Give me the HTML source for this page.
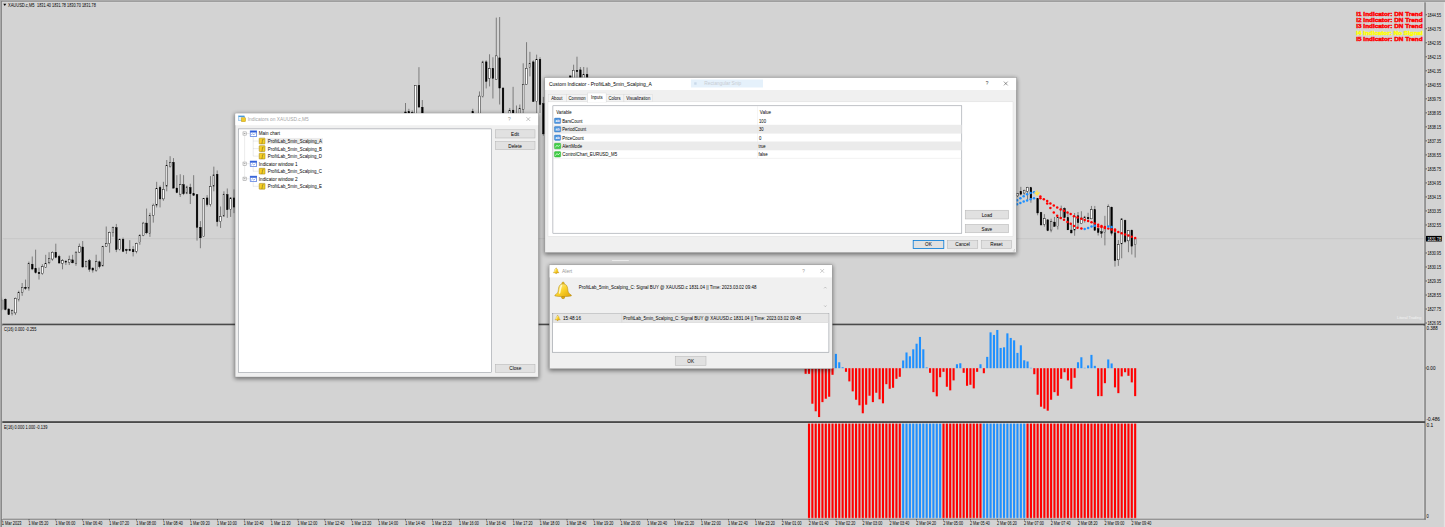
<!DOCTYPE html>
<html><head><meta charset="utf-8"><title>XAUUSD.c,M5</title>
<style>
html,body{margin:0;padding:0;background:#d3d3d3;overflow:hidden}
#root{position:relative;width:1445px;height:527px;overflow:hidden}
svg{display:block;position:absolute;left:0;top:0}
</style>
</head><body>
<div id="root">
<svg width="1445" height="527" viewBox="0 0 1445 527" font-family='"Liberation Sans", sans-serif'>
<defs>
<filter id="sh" x="-5%" y="-10%" width="110%" height="120%"><feGaussianBlur stdDeviation="2.2"/></filter>
<linearGradient id="gold" x1="0" y1="0" x2="1" y2="1"><stop offset="0" stop-color="#fff3a6"/><stop offset="0.5" stop-color="#fad22c"/><stop offset="1" stop-color="#dfa20a"/></linearGradient>
</defs>
<rect x="0" y="0" width="1445" height="527" fill="#d3d3d3"/>
<line x1="2" x2="1425" y1="238.6" y2="238.6" stroke="#c3c3c3" stroke-width="0.7"/>
<g id="candles" stroke="#000" stroke-width="0.42">
<line x1="2.00" x2="2.00" y1="297.52" y2="310.34"/>
<rect x="1.17" y="300.09" width="1.67" height="9.40" fill="#fff"/>
<line x1="5.36" x2="5.36" y1="298.38" y2="310.34"/>
<rect x="4.53" y="299.23" width="1.67" height="10.26" fill="#000"/>
<line x1="8.72" x2="8.72" y1="308.63" y2="314.96"/>
<rect x="7.89" y="308.97" width="1.67" height="5.64" fill="#000"/>
<line x1="12.09" x2="12.09" y1="309.49" y2="315.47"/>
<rect x="11.25" y="310.68" width="1.67" height="3.08" fill="#fff"/>
<line x1="15.45" x2="15.45" y1="297.52" y2="314.96"/>
<rect x="14.61" y="298.38" width="1.67" height="14.53" fill="#fff"/>
<line x1="18.81" x2="18.81" y1="290.68" y2="301.45"/>
<rect x="17.98" y="292.39" width="1.67" height="6.84" fill="#fff"/>
<line x1="22.17" x2="22.17" y1="282.99" y2="295.81"/>
<rect x="21.34" y="287.26" width="1.67" height="5.13" fill="#fff"/>
<line x1="25.54" x2="25.54" y1="279.57" y2="289.83"/>
<rect x="24.70" y="287.26" width="1.67" height="1.20" fill="#000"/>
<line x1="28.90" x2="28.90" y1="261.62" y2="290.68"/>
<rect x="28.06" y="263.33" width="1.67" height="24.79" fill="#fff"/>
<line x1="32.26" x2="32.26" y1="256.50" y2="270.17"/>
<rect x="31.43" y="264.19" width="1.67" height="4.79" fill="#000"/>
<line x1="35.62" x2="35.62" y1="249.66" y2="273.59"/>
<rect x="34.79" y="268.46" width="1.67" height="4.27" fill="#000"/>
<line x1="38.99" x2="38.99" y1="267.61" y2="279.57"/>
<rect x="38.15" y="272.39" width="1.67" height="1.37" fill="#000"/>
<line x1="42.35" x2="42.35" y1="264.19" y2="274.79"/>
<rect x="41.51" y="266.75" width="1.67" height="6.84" fill="#fff"/>
<line x1="45.71" x2="45.71" y1="254.79" y2="267.95"/>
<rect x="44.88" y="263.33" width="1.67" height="3.93" fill="#fff"/>
<line x1="49.07" x2="49.07" y1="252.22" y2="264.19"/>
<rect x="48.24" y="258.21" width="1.67" height="4.62" fill="#fff"/>
<line x1="52.44" x2="52.44" y1="251.37" y2="260.77"/>
<rect x="51.60" y="252.22" width="1.67" height="6.84" fill="#fff"/>
<line x1="55.80" x2="55.80" y1="243.68" y2="258.21"/>
<rect x="54.96" y="252.22" width="1.67" height="5.13" fill="#000"/>
<line x1="59.16" x2="59.16" y1="254.79" y2="263.68"/>
<rect x="58.33" y="256.50" width="1.67" height="6.50" fill="#000"/>
<line x1="62.52" x2="62.52" y1="259.06" y2="269.32"/>
<rect x="61.69" y="260.77" width="1.67" height="2.56" fill="#fff"/>
<line x1="65.89" x2="65.89" y1="259.91" y2="265.04"/>
<rect x="65.05" y="261.28" width="1.67" height="0.85" fill="#000"/>
<line x1="69.25" x2="69.25" y1="255.64" y2="265.04"/>
<rect x="68.42" y="259.40" width="1.67" height="3.08" fill="#fff"/>
<line x1="72.61" x2="72.61" y1="254.79" y2="263.33"/>
<rect x="71.78" y="259.91" width="1.67" height="2.91" fill="#000"/>
<line x1="75.97" x2="75.97" y1="251.28" y2="265.81"/>
<rect x="75.14" y="252.14" width="1.67" height="11.11" fill="#fff"/>
<line x1="79.34" x2="79.34" y1="243.59" y2="252.99"/>
<rect x="78.50" y="246.50" width="1.67" height="5.64" fill="#fff"/>
<line x1="82.70" x2="82.70" y1="241.03" y2="267.52"/>
<rect x="81.86" y="247.01" width="1.67" height="20.00" fill="#000"/>
<line x1="86.06" x2="86.06" y1="260.68" y2="267.52"/>
<rect x="85.23" y="261.20" width="1.67" height="5.47" fill="#fff"/>
<line x1="89.42" x2="89.42" y1="258.97" y2="271.79"/>
<rect x="88.59" y="260.68" width="1.67" height="8.55" fill="#000"/>
<line x1="92.79" x2="92.79" y1="267.52" y2="272.65"/>
<rect x="91.95" y="268.03" width="1.67" height="2.05" fill="#000"/>
<line x1="96.15" x2="96.15" y1="254.70" y2="271.79"/>
<rect x="95.31" y="261.54" width="1.67" height="8.89" fill="#fff"/>
<line x1="99.51" x2="99.51" y1="260.68" y2="268.38"/>
<rect x="98.68" y="261.88" width="1.67" height="4.79" fill="#000"/>
<line x1="102.88" x2="102.88" y1="245.81" y2="266.67"/>
<rect x="102.04" y="246.50" width="1.67" height="19.32" fill="#fff"/>
<line x1="106.24" x2="106.24" y1="226.50" y2="247.01"/>
<rect x="105.40" y="243.59" width="1.67" height="2.91" fill="#fff"/>
<line x1="109.60" x2="109.60" y1="231.62" y2="252.65"/>
<rect x="108.77" y="232.48" width="1.67" height="11.11" fill="#fff"/>
<line x1="112.96" x2="112.96" y1="226.50" y2="236.75"/>
<rect x="112.13" y="227.35" width="1.67" height="5.13" fill="#fff"/>
<line x1="116.32" x2="116.32" y1="223.93" y2="252.14"/>
<rect x="115.49" y="227.69" width="1.67" height="21.88" fill="#000"/>
<line x1="119.69" x2="119.69" y1="238.46" y2="250.43"/>
<rect x="118.85" y="239.66" width="1.67" height="9.91" fill="#fff"/>
<line x1="123.05" x2="123.05" y1="237.61" y2="252.14"/>
<rect x="122.22" y="239.32" width="1.67" height="11.97" fill="#000"/>
<line x1="126.41" x2="126.41" y1="248.72" y2="253.85"/>
<rect x="125.58" y="249.57" width="1.67" height="1.03" fill="#000"/>
<line x1="129.77" x2="129.77" y1="240.17" y2="251.28"/>
<rect x="128.94" y="249.57" width="1.67" height="1.03" fill="#000"/>
<line x1="133.14" x2="133.14" y1="246.15" y2="256.41"/>
<rect x="132.30" y="249.57" width="1.67" height="2.22" fill="#000"/>
<line x1="136.50" x2="136.50" y1="242.74" y2="253.33"/>
<rect x="135.66" y="243.59" width="1.67" height="7.69" fill="#fff"/>
<line x1="139.86" x2="139.86" y1="234.19" y2="244.79"/>
<rect x="139.03" y="235.38" width="1.67" height="7.35" fill="#fff"/>
<line x1="143.22" x2="143.22" y1="221.88" y2="236.24"/>
<rect x="142.39" y="223.08" width="1.67" height="12.31" fill="#fff"/>
<line x1="146.59" x2="146.59" y1="208.55" y2="234.19"/>
<rect x="145.75" y="223.08" width="1.67" height="9.74" fill="#000"/>
<line x1="149.95" x2="149.95" y1="212.75" y2="236.85"/>
<rect x="149.11" y="215.41" width="1.67" height="17.84" fill="#fff"/>
<line x1="153.31" x2="153.31" y1="203.64" y2="222.62"/>
<rect x="152.48" y="205.16" width="1.67" height="10.25" fill="#fff"/>
<line x1="156.67" x2="156.67" y1="181.82" y2="207.44"/>
<rect x="155.84" y="188.46" width="1.67" height="16.70" fill="#fff"/>
<line x1="160.04" x2="160.04" y1="185.62" y2="207.44"/>
<rect x="159.20" y="187.51" width="1.67" height="11.39" fill="#000"/>
<line x1="163.40" x2="163.40" y1="181.82" y2="200.80"/>
<rect x="162.56" y="189.41" width="1.67" height="9.49" fill="#fff"/>
<line x1="166.76" x2="166.76" y1="160.00" y2="191.31"/>
<rect x="165.93" y="165.69" width="1.67" height="20.49" fill="#fff"/>
<line x1="170.12" x2="170.12" y1="156.20" y2="167.59"/>
<rect x="169.29" y="162.28" width="1.67" height="4.36" fill="#fff"/>
<line x1="173.49" x2="173.49" y1="158.10" y2="188.46"/>
<rect x="172.65" y="162.28" width="1.67" height="25.81" fill="#000"/>
<line x1="176.85" x2="176.85" y1="175.18" y2="193.21"/>
<rect x="176.01" y="188.08" width="1.67" height="4.55" fill="#000"/>
<line x1="180.21" x2="180.21" y1="174.23" y2="197.00"/>
<rect x="179.38" y="184.67" width="1.67" height="9.49" fill="#fff"/>
<line x1="183.57" x2="183.57" y1="175.18" y2="195.10"/>
<rect x="182.74" y="184.67" width="1.67" height="9.11" fill="#000"/>
<line x1="186.94" x2="186.94" y1="185.62" y2="194.16"/>
<rect x="186.10" y="186.94" width="1.67" height="6.26" fill="#fff"/>
<line x1="190.30" x2="190.30" y1="183.72" y2="204.02"/>
<rect x="189.46" y="187.51" width="1.67" height="6.26" fill="#000"/>
<line x1="193.66" x2="193.66" y1="175.18" y2="196.05"/>
<rect x="192.83" y="193.78" width="1.67" height="1.52" fill="#000"/>
<line x1="197.02" x2="197.02" y1="194.16" y2="240.65"/>
<rect x="196.19" y="194.72" width="1.67" height="32.64" fill="#000"/>
<line x1="200.39" x2="200.39" y1="221.10" y2="248.24"/>
<rect x="199.55" y="227.36" width="1.67" height="10.44" fill="#000"/>
<line x1="203.75" x2="203.75" y1="197.95" y2="236.85"/>
<rect x="202.91" y="198.52" width="1.67" height="37.95" fill="#fff"/>
<line x1="207.11" x2="207.11" y1="195.10" y2="206.49"/>
<rect x="206.28" y="197.95" width="1.67" height="6.64" fill="#000"/>
<line x1="210.47" x2="210.47" y1="176.13" y2="206.49"/>
<rect x="209.64" y="186.57" width="1.67" height="18.03" fill="#fff"/>
<line x1="213.84" x2="213.84" y1="166.64" y2="191.31"/>
<rect x="213.00" y="174.80" width="1.67" height="11.39" fill="#fff"/>
<line x1="217.20" x2="217.20" y1="170.44" y2="226.41"/>
<rect x="216.36" y="174.23" width="1.67" height="47.44" fill="#000"/>
<line x1="220.56" x2="220.56" y1="206.49" y2="227.93"/>
<rect x="219.73" y="216.55" width="1.67" height="5.12" fill="#fff"/>
<line x1="223.92" x2="223.92" y1="191.31" y2="216.93"/>
<rect x="223.09" y="194.16" width="1.67" height="21.82" fill="#fff"/>
<line x1="227.29" x2="227.29" y1="188.46" y2="217.87"/>
<rect x="226.45" y="194.54" width="1.67" height="15.18" fill="#000"/>
<line x1="230.65" x2="230.65" y1="197.00" y2="216.93"/>
<rect x="229.81" y="197.95" width="1.67" height="11.39" fill="#fff"/>
<line x1="234.01" x2="234.01" y1="189.41" y2="213.13"/>
<rect x="233.18" y="197.95" width="1.67" height="9.11" fill="#000"/>
<line x1="405.50" x2="405.50" y1="103.00" y2="120.00"/>
<rect x="404.67" y="112.00" width="1.67" height="6.00" fill="#000"/>
<line x1="408.86" x2="408.86" y1="108.80" y2="120.00"/>
<rect x="408.03" y="111.60" width="1.67" height="6.40" fill="#000"/>
<line x1="412.22" x2="412.22" y1="110.50" y2="120.00"/>
<rect x="411.39" y="112.60" width="1.67" height="5.40" fill="#000"/>
<line x1="415.59" x2="415.59" y1="85.00" y2="122.00"/>
<rect x="414.75" y="85.40" width="1.67" height="34.60" fill="#fff"/>
<line x1="418.95" x2="418.95" y1="67.20" y2="108.00"/>
<rect x="418.12" y="85.40" width="1.67" height="21.60" fill="#000"/>
<line x1="422.31" x2="422.31" y1="100.00" y2="122.00"/>
<rect x="421.48" y="107.20" width="1.67" height="12.80" fill="#000"/>
<line x1="472.75" x2="472.75" y1="108.75" y2="119.61"/>
<rect x="471.92" y="111.57" width="1.67" height="7.04" fill="#000"/>
<line x1="479.47" x2="479.47" y1="91.46" y2="123.64"/>
<rect x="478.64" y="96.08" width="1.67" height="26.55" fill="#fff"/>
<line x1="482.84" x2="482.84" y1="60.68" y2="97.49"/>
<rect x="482.00" y="61.89" width="1.67" height="34.59" fill="#fff"/>
<line x1="486.20" x2="486.20" y1="60.28" y2="88.44"/>
<rect x="485.37" y="61.89" width="1.67" height="19.51" fill="#000"/>
<line x1="489.56" x2="489.56" y1="54.25" y2="86.43"/>
<rect x="488.73" y="68.73" width="1.67" height="9.65" fill="#fff"/>
<line x1="492.92" x2="492.92" y1="57.26" y2="98.50"/>
<rect x="492.09" y="68.33" width="1.67" height="10.06" fill="#000"/>
<line x1="496.29" x2="496.29" y1="17.64" y2="79.79"/>
<rect x="495.45" y="55.86" width="1.67" height="23.53" fill="#fff"/>
<line x1="499.65" x2="499.65" y1="17.04" y2="104.53"/>
<rect x="498.81" y="57.87" width="1.67" height="30.17" fill="#000"/>
<line x1="503.01" x2="503.01" y1="87.43" y2="123.64"/>
<rect x="502.18" y="88.04" width="1.67" height="34.59" fill="#000"/>
<line x1="509.74" x2="509.74" y1="107.95" y2="119.61"/>
<rect x="508.90" y="110.56" width="1.67" height="8.05" fill="#fff"/>
<line x1="513.10" x2="513.10" y1="86.83" y2="119.61"/>
<rect x="512.26" y="110.16" width="1.67" height="8.45" fill="#000"/>
<line x1="516.46" x2="516.46" y1="105.53" y2="119.61"/>
<rect x="515.63" y="116.60" width="1.67" height="2.01" fill="#000"/>
<line x1="519.82" x2="519.82" y1="104.53" y2="119.61"/>
<rect x="518.99" y="108.55" width="1.67" height="10.06" fill="#fff"/>
<line x1="523.19" x2="523.19" y1="63.30" y2="119.61"/>
<rect x="522.35" y="84.42" width="1.67" height="24.94" fill="#fff"/>
<line x1="526.55" x2="526.55" y1="42.18" y2="84.82"/>
<rect x="525.71" y="68.33" width="1.67" height="16.09" fill="#fff"/>
<line x1="529.91" x2="529.91" y1="51.83" y2="76.37"/>
<rect x="529.08" y="63.30" width="1.67" height="4.02" fill="#fff"/>
<line x1="533.27" x2="533.27" y1="60.28" y2="101.91"/>
<rect x="532.44" y="61.89" width="1.67" height="39.62" fill="#000"/>
<line x1="536.64" x2="536.64" y1="54.65" y2="112.98"/>
<rect x="535.80" y="59.28" width="1.67" height="42.24" fill="#fff"/>
<line x1="540.00" x2="540.00" y1="57.26" y2="112.98"/>
<rect x="539.16" y="59.28" width="1.67" height="45.25" fill="#000"/>
<line x1="543.36" x2="543.36" y1="96.89" y2="135.70"/>
<rect x="542.53" y="103.52" width="1.67" height="30.37" fill="#000"/>
<line x1="570.26" x2="570.26" y1="75.50" y2="80.00"/>
<rect x="569.43" y="75.90" width="1.67" height="4.10" fill="#000"/>
<line x1="573.62" x2="573.62" y1="64.70" y2="80.00"/>
<rect x="572.79" y="70.30" width="1.67" height="9.70" fill="#fff"/>
<line x1="576.99" x2="576.99" y1="56.70" y2="80.00"/>
<rect x="576.15" y="70.30" width="1.67" height="1.30" fill="#000"/>
<line x1="580.35" x2="580.35" y1="67.00" y2="80.00"/>
<rect x="579.51" y="69.90" width="1.67" height="10.10" fill="#000"/>
<line x1="583.71" x2="583.71" y1="67.00" y2="80.00"/>
<rect x="582.88" y="74.30" width="1.67" height="5.70" fill="#fff"/>
<line x1="587.07" x2="587.07" y1="67.50" y2="80.00"/>
<rect x="586.24" y="74.30" width="1.67" height="5.70" fill="#000"/>
<line x1="1017.47" x2="1017.47" y1="193.08" y2="197.06"/>
<rect x="1016.64" y="193.65" width="1.67" height="2.28" fill="#fff"/>
<line x1="1020.84" x2="1020.84" y1="186.83" y2="195.36"/>
<rect x="1020.00" y="191.38" width="1.67" height="2.84" fill="#000"/>
<line x1="1024.20" x2="1024.20" y1="189.67" y2="194.79"/>
<rect x="1023.36" y="190.24" width="1.67" height="2.84" fill="#fff"/>
<line x1="1027.56" x2="1027.56" y1="186.83" y2="199.91"/>
<rect x="1026.73" y="187.39" width="1.67" height="3.98" fill="#fff"/>
<line x1="1030.92" x2="1030.92" y1="186.83" y2="202.75"/>
<rect x="1030.09" y="187.74" width="1.67" height="10.47" fill="#000"/>
<line x1="1037.65" x2="1037.65" y1="198.20" y2="215.27"/>
<rect x="1036.81" y="198.77" width="1.67" height="14.22" fill="#000"/>
<line x1="1041.01" x2="1041.01" y1="211.85" y2="225.51"/>
<rect x="1040.18" y="212.42" width="1.67" height="12.51" fill="#000"/>
<line x1="1044.38" x2="1044.38" y1="214.13" y2="226.64"/>
<rect x="1043.54" y="218.68" width="1.67" height="5.69" fill="#fff"/>
<line x1="1047.74" x2="1047.74" y1="219.25" y2="231.19"/>
<rect x="1046.90" y="219.82" width="1.67" height="10.81" fill="#000"/>
<line x1="1051.10" x2="1051.10" y1="218.68" y2="232.33"/>
<rect x="1050.26" y="221.52" width="1.67" height="8.53" fill="#fff"/>
<line x1="1054.46" x2="1054.46" y1="216.97" y2="226.64"/>
<rect x="1053.63" y="222.09" width="1.67" height="4.32" fill="#000"/>
<line x1="1057.83" x2="1057.83" y1="216.41" y2="229.49"/>
<rect x="1056.99" y="217.54" width="1.67" height="9.10" fill="#fff"/>
<line x1="1061.19" x2="1061.19" y1="205.60" y2="219.25"/>
<rect x="1060.35" y="209.01" width="1.67" height="8.53" fill="#fff"/>
<line x1="1064.55" x2="1064.55" y1="207.30" y2="218.11"/>
<rect x="1063.71" y="208.44" width="1.67" height="9.10" fill="#000"/>
<line x1="1067.91" x2="1067.91" y1="212.99" y2="230.06"/>
<rect x="1067.08" y="217.54" width="1.67" height="12.29" fill="#000"/>
<line x1="1071.27" x2="1071.27" y1="223.23" y2="233.47"/>
<rect x="1070.44" y="230.06" width="1.67" height="2.84" fill="#000"/>
<line x1="1074.64" x2="1074.64" y1="212.99" y2="235.75"/>
<rect x="1073.80" y="216.41" width="1.67" height="13.65" fill="#fff"/>
<line x1="1078.00" x2="1078.00" y1="212.00" y2="227.94"/>
<rect x="1077.16" y="215.80" width="1.67" height="6.83" fill="#000"/>
<line x1="1081.36" x2="1081.36" y1="211.24" y2="224.14"/>
<rect x="1080.53" y="218.07" width="1.67" height="5.61" fill="#fff"/>
<line x1="1084.72" x2="1084.72" y1="215.80" y2="222.63"/>
<rect x="1083.89" y="217.01" width="1.67" height="2.58" fill="#fff"/>
<line x1="1088.09" x2="1088.09" y1="212.76" y2="219.59"/>
<rect x="1087.25" y="217.31" width="1.67" height="1.52" fill="#000"/>
<line x1="1091.45" x2="1091.45" y1="205.93" y2="219.14"/>
<rect x="1090.62" y="209.73" width="1.67" height="9.10" fill="#fff"/>
<line x1="1094.81" x2="1094.81" y1="205.93" y2="230.97"/>
<rect x="1093.98" y="209.73" width="1.67" height="20.49" fill="#000"/>
<line x1="1098.17" x2="1098.17" y1="227.94" y2="235.52"/>
<rect x="1097.34" y="228.69" width="1.67" height="3.79" fill="#000"/>
<line x1="1101.54" x2="1101.54" y1="227.94" y2="237.80"/>
<rect x="1100.70" y="231.73" width="1.67" height="1.52" fill="#000"/>
<line x1="1104.90" x2="1104.90" y1="215.80" y2="245.39"/>
<rect x="1104.06" y="227.18" width="1.67" height="5.31" fill="#fff"/>
<line x1="1108.26" x2="1108.26" y1="204.42" y2="226.72"/>
<rect x="1107.43" y="206.69" width="1.67" height="19.73" fill="#fff"/>
<line x1="1111.62" x2="1111.62" y1="206.69" y2="235.52"/>
<rect x="1110.79" y="207.15" width="1.67" height="26.10" fill="#000"/>
<line x1="1114.99" x2="1114.99" y1="232.49" y2="266.63"/>
<rect x="1114.15" y="232.79" width="1.67" height="27.77" fill="#000"/>
<line x1="1118.35" x2="1118.35" y1="240.08" y2="265.87"/>
<rect x="1117.51" y="244.63" width="1.67" height="15.17" fill="#fff"/>
<line x1="1121.71" x2="1121.71" y1="218.07" y2="258.29"/>
<rect x="1120.88" y="218.83" width="1.67" height="25.04" fill="#fff"/>
<line x1="1125.08" x2="1125.08" y1="219.59" y2="243.11"/>
<rect x="1124.24" y="220.35" width="1.67" height="21.24" fill="#000"/>
<line x1="1128.44" x2="1128.44" y1="230.21" y2="252.22"/>
<rect x="1127.60" y="230.52" width="1.67" height="10.32" fill="#fff"/>
<line x1="1131.80" x2="1131.80" y1="229.45" y2="254.49"/>
<rect x="1130.96" y="230.21" width="1.67" height="15.93" fill="#000"/>
<line x1="1135.16" x2="1135.16" y1="238.56" y2="257.53"/>
<rect x="1134.33" y="238.86" width="1.67" height="5.77" fill="#fff"/>
</g>
<circle cx="1017.1" cy="200.2" r="1.25" fill="#1e90ff"/>
<circle cx="1020.4" cy="198.2" r="1.25" fill="#1e90ff"/>
<circle cx="1023.7" cy="196.3" r="1.25" fill="#1e90ff"/>
<circle cx="1027.1" cy="194.2" r="1.25" fill="#1e90ff"/>
<circle cx="1030.6" cy="192.9" r="1.25" fill="#1e90ff"/>
<circle cx="1034.0" cy="192.3" r="1.25" fill="#1e90ff"/>
<circle cx="1017.1" cy="204.2" r="1.25" fill="#1e90ff"/>
<circle cx="1020.4" cy="203.1" r="1.25" fill="#1e90ff"/>
<circle cx="1023.7" cy="201.6" r="1.25" fill="#1e90ff"/>
<circle cx="1027.1" cy="200.6" r="1.25" fill="#1e90ff"/>
<circle cx="1030.6" cy="199.3" r="1.25" fill="#1e90ff"/>
<circle cx="1034.0" cy="198.2" r="1.25" fill="#1e90ff"/>
<circle cx="1040.4" cy="196.5" r="1.25" fill="#ff0000"/>
<circle cx="1040.4" cy="198.3" r="1.25" fill="#ff0000"/>
<circle cx="1043.8" cy="199.3" r="1.25" fill="#ff0000"/>
<circle cx="1047.2" cy="201.0" r="1.25" fill="#ff0000"/>
<circle cx="1050.4" cy="203.5" r="1.25" fill="#ff0000"/>
<circle cx="1053.8" cy="205.6" r="1.25" fill="#ff0000"/>
<circle cx="1057.2" cy="207.6" r="1.25" fill="#ff0000"/>
<circle cx="1060.6" cy="209.4" r="1.25" fill="#ff0000"/>
<circle cx="1064.0" cy="210.7" r="1.25" fill="#ff0000"/>
<circle cx="1067.5" cy="212.4" r="1.25" fill="#ff0000"/>
<circle cx="1070.7" cy="214.1" r="1.25" fill="#ff0000"/>
<circle cx="1074.0" cy="216.2" r="1.25" fill="#ff0000"/>
<circle cx="1077.5" cy="217.5" r="1.25" fill="#ff0000"/>
<circle cx="1047.2" cy="203.5" r="1.25" fill="#ff0000"/>
<circle cx="1050.4" cy="207.9" r="1.25" fill="#ff0000"/>
<circle cx="1053.8" cy="212.4" r="1.25" fill="#ff0000"/>
<circle cx="1057.2" cy="215.8" r="1.25" fill="#ff0000"/>
<circle cx="1060.6" cy="218.1" r="1.25" fill="#ff0000"/>
<circle cx="1064.0" cy="219.8" r="1.25" fill="#ff0000"/>
<circle cx="1067.5" cy="222.1" r="1.25" fill="#ff0000"/>
<circle cx="1070.7" cy="223.8" r="1.25" fill="#ff0000"/>
<circle cx="1074.0" cy="226.1" r="1.25" fill="#ff0000"/>
<circle cx="1077.5" cy="227.8" r="1.25" fill="#ff0000"/>
<circle cx="1081.4" cy="218.7" r="1.25" fill="#ff0000"/>
<circle cx="1084.7" cy="219.9" r="1.25" fill="#ff0000"/>
<circle cx="1088.1" cy="221.1" r="1.25" fill="#ff0000"/>
<circle cx="1091.5" cy="222.3" r="1.25" fill="#ff0000"/>
<circle cx="1094.8" cy="223.5" r="1.25" fill="#ff0000"/>
<circle cx="1098.2" cy="224.7" r="1.25" fill="#ff0000"/>
<circle cx="1101.5" cy="225.9" r="1.25" fill="#ff0000"/>
<circle cx="1104.9" cy="227.1" r="1.25" fill="#ff0000"/>
<circle cx="1108.3" cy="228.4" r="1.25" fill="#ff0000"/>
<circle cx="1111.6" cy="229.6" r="1.25" fill="#ff0000"/>
<circle cx="1115.0" cy="230.8" r="1.25" fill="#ff0000"/>
<circle cx="1118.3" cy="232.0" r="1.25" fill="#ff0000"/>
<circle cx="1121.7" cy="233.2" r="1.25" fill="#ff0000"/>
<circle cx="1125.1" cy="234.4" r="1.25" fill="#ff0000"/>
<circle cx="1128.4" cy="235.6" r="1.25" fill="#ff0000"/>
<circle cx="1131.8" cy="236.8" r="1.25" fill="#ff0000"/>
<circle cx="1135.2" cy="238.0" r="1.25" fill="#ff0000"/>
<circle cx="1081.4" cy="228.6" r="1.25" fill="#ff0000"/>
<circle cx="1084.7" cy="228.9" r="1.25" fill="#1e90ff"/>
<circle cx="1088.1" cy="228.0" r="1.25" fill="#1e90ff"/>
<circle cx="1091.5" cy="226.6" r="1.25" fill="#1e90ff"/>
<circle cx="1094.8" cy="225.8" r="1.25" fill="#1e90ff"/>
<circle cx="1098.2" cy="226.6" r="1.25" fill="#ff0000"/>
<circle cx="1101.5" cy="227.0" r="1.25" fill="#ff0000"/>
<circle cx="1104.9" cy="228.0" r="1.25" fill="#ff0000"/>
<circle cx="1108.3" cy="226.6" r="1.25" fill="#1e90ff"/>
<circle cx="1111.6" cy="226.9" r="1.25" fill="#1e90ff"/>
<circle cx="1115.0" cy="229.5" r="1.25" fill="#ff0000"/>
<path d="M1034.6 192.2 L1037 195.2 L1039.4 192.2 M1037 190.5 L1037 195" stroke="#ffe34d" stroke-width="1.3" fill="none"/>
<g id="h1">
<rect x="804.59" y="368.20" width="2.1" height="5.62" fill="#ff0000"/>
<rect x="807.95" y="368.20" width="2.1" height="5.62" fill="#ff0000"/>
<rect x="811.31" y="368.20" width="2.1" height="35.52" fill="#ff0000"/>
<rect x="814.67" y="368.20" width="2.1" height="43.09" fill="#ff0000"/>
<rect x="818.04" y="368.20" width="2.1" height="48.87" fill="#ff0000"/>
<rect x="821.40" y="368.20" width="2.1" height="33.92" fill="#ff0000"/>
<rect x="824.76" y="368.20" width="2.1" height="30.53" fill="#ff0000"/>
<rect x="828.12" y="368.20" width="2.1" height="28.54" fill="#ff0000"/>
<rect x="831.49" y="368.20" width="2.1" height="6.61" fill="#ff0000"/>
<rect x="834.85" y="353.88" width="2.1" height="14.32" fill="#1e90ff"/>
<rect x="838.21" y="362.26" width="2.1" height="5.94" fill="#1e90ff"/>
<rect x="841.58" y="367.24" width="2.1" height="0.96" fill="#1e90ff"/>
<rect x="844.94" y="368.20" width="2.1" height="3.62" fill="#ff0000"/>
<rect x="848.30" y="368.20" width="2.1" height="13.19" fill="#ff0000"/>
<rect x="851.66" y="368.20" width="2.1" height="23.16" fill="#ff0000"/>
<rect x="855.02" y="368.20" width="2.1" height="31.53" fill="#ff0000"/>
<rect x="858.39" y="368.20" width="2.1" height="37.11" fill="#ff0000"/>
<rect x="861.75" y="368.20" width="2.1" height="45.08" fill="#ff0000"/>
<rect x="865.11" y="368.20" width="2.1" height="36.51" fill="#ff0000"/>
<rect x="868.48" y="368.20" width="2.1" height="27.54" fill="#ff0000"/>
<rect x="871.84" y="368.20" width="2.1" height="33.92" fill="#ff0000"/>
<rect x="875.20" y="368.20" width="2.1" height="24.55" fill="#ff0000"/>
<rect x="878.56" y="368.20" width="2.1" height="31.13" fill="#ff0000"/>
<rect x="881.92" y="368.20" width="2.1" height="35.12" fill="#ff0000"/>
<rect x="885.29" y="368.20" width="2.1" height="15.98" fill="#ff0000"/>
<rect x="888.65" y="368.20" width="2.1" height="20.57" fill="#ff0000"/>
<rect x="892.01" y="368.20" width="2.1" height="19.57" fill="#ff0000"/>
<rect x="895.38" y="368.20" width="2.1" height="10.60" fill="#ff0000"/>
<rect x="898.74" y="368.20" width="2.1" height="8.61" fill="#ff0000"/>
<rect x="902.10" y="360.46" width="2.1" height="7.74" fill="#1e90ff"/>
<rect x="905.46" y="352.49" width="2.1" height="15.71" fill="#1e90ff"/>
<rect x="908.83" y="356.28" width="2.1" height="11.92" fill="#1e90ff"/>
<rect x="912.19" y="349.30" width="2.1" height="18.90" fill="#1e90ff"/>
<rect x="915.55" y="343.72" width="2.1" height="24.48" fill="#1e90ff"/>
<rect x="918.91" y="336.94" width="2.1" height="31.26" fill="#1e90ff"/>
<rect x="922.27" y="349.30" width="2.1" height="18.90" fill="#1e90ff"/>
<rect x="925.64" y="367.44" width="2.1" height="0.76" fill="#1e90ff"/>
<rect x="929.00" y="368.20" width="2.1" height="4.62" fill="#ff0000"/>
<rect x="932.36" y="368.20" width="2.1" height="23.95" fill="#ff0000"/>
<rect x="935.73" y="368.20" width="2.1" height="28.14" fill="#ff0000"/>
<rect x="939.09" y="368.20" width="2.1" height="9.01" fill="#ff0000"/>
<rect x="942.45" y="368.20" width="2.1" height="3.62" fill="#ff0000"/>
<rect x="945.81" y="368.20" width="2.1" height="18.57" fill="#ff0000"/>
<rect x="949.17" y="368.20" width="2.1" height="22.16" fill="#ff0000"/>
<rect x="952.54" y="368.20" width="2.1" height="12.19" fill="#ff0000"/>
<rect x="955.90" y="364.25" width="2.1" height="3.95" fill="#1e90ff"/>
<rect x="959.26" y="363.25" width="2.1" height="4.95" fill="#1e90ff"/>
<rect x="962.62" y="368.20" width="2.1" height="4.62" fill="#ff0000"/>
<rect x="965.99" y="368.20" width="2.1" height="17.58" fill="#ff0000"/>
<rect x="969.35" y="368.20" width="2.1" height="16.58" fill="#ff0000"/>
<rect x="972.71" y="368.20" width="2.1" height="20.17" fill="#ff0000"/>
<rect x="976.08" y="368.20" width="2.1" height="3.62" fill="#ff0000"/>
<rect x="979.44" y="364.25" width="2.1" height="3.95" fill="#1e90ff"/>
<rect x="982.80" y="368.20" width="2.1" height="5.02" fill="#ff0000"/>
<rect x="986.16" y="356.87" width="2.1" height="11.33" fill="#1e90ff"/>
<rect x="989.52" y="332.36" width="2.1" height="35.84" fill="#1e90ff"/>
<rect x="992.89" y="334.95" width="2.1" height="33.25" fill="#1e90ff"/>
<rect x="996.25" y="329.97" width="2.1" height="38.23" fill="#1e90ff"/>
<rect x="999.61" y="347.91" width="2.1" height="20.29" fill="#1e90ff"/>
<rect x="1002.98" y="347.31" width="2.1" height="20.89" fill="#1e90ff"/>
<rect x="1006.34" y="333.35" width="2.1" height="34.85" fill="#1e90ff"/>
<rect x="1009.70" y="337.94" width="2.1" height="30.26" fill="#1e90ff"/>
<rect x="1013.06" y="340.33" width="2.1" height="27.87" fill="#1e90ff"/>
<rect x="1016.42" y="352.89" width="2.1" height="15.31" fill="#1e90ff"/>
<rect x="1019.79" y="345.31" width="2.1" height="22.89" fill="#1e90ff"/>
<rect x="1023.15" y="360.26" width="2.1" height="7.94" fill="#1e90ff"/>
<rect x="1026.51" y="361.46" width="2.1" height="6.74" fill="#1e90ff"/>
<rect x="1029.88" y="367.84" width="2.1" height="0.40" fill="#1e90ff"/>
<rect x="1033.24" y="368.20" width="2.1" height="6.02" fill="#ff0000"/>
<rect x="1036.60" y="368.20" width="2.1" height="26.55" fill="#ff0000"/>
<rect x="1039.96" y="368.20" width="2.1" height="38.51" fill="#ff0000"/>
<rect x="1043.33" y="368.20" width="2.1" height="40.50" fill="#ff0000"/>
<rect x="1046.69" y="368.20" width="2.1" height="42.49" fill="#ff0000"/>
<rect x="1050.05" y="368.20" width="2.1" height="31.53" fill="#ff0000"/>
<rect x="1053.41" y="368.20" width="2.1" height="23.95" fill="#ff0000"/>
<rect x="1056.78" y="368.20" width="2.1" height="27.54" fill="#ff0000"/>
<rect x="1060.14" y="368.20" width="2.1" height="10.60" fill="#ff0000"/>
<rect x="1063.50" y="368.20" width="2.1" height="4.02" fill="#ff0000"/>
<rect x="1066.86" y="368.20" width="2.1" height="12.19" fill="#ff0000"/>
<rect x="1070.22" y="368.20" width="2.1" height="20.57" fill="#ff0000"/>
<rect x="1073.59" y="368.20" width="2.1" height="9.60" fill="#ff0000"/>
<rect x="1076.95" y="362.26" width="2.1" height="5.94" fill="#1e90ff"/>
<rect x="1080.31" y="357.27" width="2.1" height="10.93" fill="#1e90ff"/>
<rect x="1083.67" y="367.84" width="2.1" height="0.40" fill="#1e90ff"/>
<rect x="1087.04" y="365.45" width="2.1" height="2.75" fill="#1e90ff"/>
<rect x="1090.40" y="354.88" width="2.1" height="13.32" fill="#1e90ff"/>
<rect x="1093.76" y="365.84" width="2.1" height="2.36" fill="#1e90ff"/>
<rect x="1097.12" y="368.20" width="2.1" height="27.94" fill="#ff0000"/>
<rect x="1100.49" y="368.20" width="2.1" height="27.94" fill="#ff0000"/>
<rect x="1103.85" y="368.20" width="2.1" height="14.99" fill="#ff0000"/>
<rect x="1107.21" y="359.47" width="2.1" height="8.73" fill="#1e90ff"/>
<rect x="1110.58" y="363.45" width="2.1" height="4.75" fill="#1e90ff"/>
<rect x="1113.94" y="368.20" width="2.1" height="19.17" fill="#ff0000"/>
<rect x="1117.30" y="368.20" width="2.1" height="24.95" fill="#ff0000"/>
<rect x="1120.66" y="368.20" width="2.1" height="8.21" fill="#ff0000"/>
<rect x="1124.03" y="368.20" width="2.1" height="4.02" fill="#ff0000"/>
<rect x="1127.39" y="368.20" width="2.1" height="7.61" fill="#ff0000"/>
<rect x="1130.75" y="368.20" width="2.1" height="14.19" fill="#ff0000"/>
<rect x="1134.11" y="368.20" width="2.1" height="27.94" fill="#ff0000"/>
</g>
<g id="h2">
<rect x="807.95" y="423.1" width="2.1" height="95.6" fill="#ff0000"/>
<rect x="811.31" y="423.1" width="2.1" height="95.6" fill="#ff0000"/>
<rect x="814.67" y="423.1" width="2.1" height="95.6" fill="#ff0000"/>
<rect x="818.04" y="423.1" width="2.1" height="95.6" fill="#ff0000"/>
<rect x="821.40" y="423.1" width="2.1" height="95.6" fill="#ff0000"/>
<rect x="824.76" y="423.1" width="2.1" height="95.6" fill="#ff0000"/>
<rect x="828.12" y="423.1" width="2.1" height="95.6" fill="#ff0000"/>
<rect x="831.49" y="423.1" width="2.1" height="95.6" fill="#ff0000"/>
<rect x="834.85" y="423.1" width="2.1" height="95.6" fill="#ff0000"/>
<rect x="838.21" y="423.1" width="2.1" height="95.6" fill="#ff0000"/>
<rect x="841.58" y="423.1" width="2.1" height="95.6" fill="#ff0000"/>
<rect x="844.94" y="423.1" width="2.1" height="95.6" fill="#ff0000"/>
<rect x="848.30" y="423.1" width="2.1" height="95.6" fill="#ff0000"/>
<rect x="851.66" y="423.1" width="2.1" height="95.6" fill="#ff0000"/>
<rect x="855.02" y="423.1" width="2.1" height="95.6" fill="#ff0000"/>
<rect x="858.39" y="423.1" width="2.1" height="95.6" fill="#ff0000"/>
<rect x="861.75" y="423.1" width="2.1" height="95.6" fill="#ff0000"/>
<rect x="865.11" y="423.1" width="2.1" height="95.6" fill="#ff0000"/>
<rect x="868.48" y="423.1" width="2.1" height="95.6" fill="#ff0000"/>
<rect x="871.84" y="423.1" width="2.1" height="95.6" fill="#ff0000"/>
<rect x="875.20" y="423.1" width="2.1" height="95.6" fill="#ff0000"/>
<rect x="878.56" y="423.1" width="2.1" height="95.6" fill="#ff0000"/>
<rect x="881.92" y="423.1" width="2.1" height="95.6" fill="#ff0000"/>
<rect x="885.29" y="423.1" width="2.1" height="95.6" fill="#ff0000"/>
<rect x="888.65" y="423.1" width="2.1" height="95.6" fill="#ff0000"/>
<rect x="892.01" y="423.1" width="2.1" height="95.6" fill="#ff0000"/>
<rect x="895.38" y="423.1" width="2.1" height="95.6" fill="#ff0000"/>
<rect x="898.74" y="423.1" width="2.1" height="95.6" fill="#ff0000"/>
<rect x="902.10" y="423.1" width="2.1" height="95.6" fill="#1e90ff"/>
<rect x="905.46" y="423.1" width="2.1" height="95.6" fill="#1e90ff"/>
<rect x="908.83" y="423.1" width="2.1" height="95.6" fill="#1e90ff"/>
<rect x="912.19" y="423.1" width="2.1" height="95.6" fill="#1e90ff"/>
<rect x="915.55" y="423.1" width="2.1" height="95.6" fill="#1e90ff"/>
<rect x="918.91" y="423.1" width="2.1" height="95.6" fill="#1e90ff"/>
<rect x="922.27" y="423.1" width="2.1" height="95.6" fill="#1e90ff"/>
<rect x="925.64" y="423.1" width="2.1" height="95.6" fill="#1e90ff"/>
<rect x="929.00" y="423.1" width="2.1" height="95.6" fill="#1e90ff"/>
<rect x="932.36" y="423.1" width="2.1" height="95.6" fill="#1e90ff"/>
<rect x="935.73" y="423.1" width="2.1" height="95.6" fill="#1e90ff"/>
<rect x="939.09" y="423.1" width="2.1" height="95.6" fill="#1e90ff"/>
<rect x="942.45" y="423.1" width="2.1" height="95.6" fill="#ff0000"/>
<rect x="945.81" y="423.1" width="2.1" height="95.6" fill="#ff0000"/>
<rect x="949.17" y="423.1" width="2.1" height="95.6" fill="#ff0000"/>
<rect x="952.54" y="423.1" width="2.1" height="95.6" fill="#ff0000"/>
<rect x="955.90" y="423.1" width="2.1" height="95.6" fill="#ff0000"/>
<rect x="959.26" y="423.1" width="2.1" height="95.6" fill="#ff0000"/>
<rect x="962.62" y="423.1" width="2.1" height="95.6" fill="#ff0000"/>
<rect x="965.99" y="423.1" width="2.1" height="95.6" fill="#ff0000"/>
<rect x="969.35" y="423.1" width="2.1" height="95.6" fill="#ff0000"/>
<rect x="972.71" y="423.1" width="2.1" height="95.6" fill="#ff0000"/>
<rect x="976.08" y="423.1" width="2.1" height="95.6" fill="#ff0000"/>
<rect x="979.44" y="423.1" width="2.1" height="95.6" fill="#ff0000"/>
<rect x="982.80" y="423.1" width="2.1" height="95.6" fill="#1e90ff"/>
<rect x="986.16" y="423.1" width="2.1" height="95.6" fill="#1e90ff"/>
<rect x="989.52" y="423.1" width="2.1" height="95.6" fill="#1e90ff"/>
<rect x="992.89" y="423.1" width="2.1" height="95.6" fill="#1e90ff"/>
<rect x="996.25" y="423.1" width="2.1" height="95.6" fill="#1e90ff"/>
<rect x="999.61" y="423.1" width="2.1" height="95.6" fill="#1e90ff"/>
<rect x="1002.98" y="423.1" width="2.1" height="95.6" fill="#1e90ff"/>
<rect x="1006.34" y="423.1" width="2.1" height="95.6" fill="#1e90ff"/>
<rect x="1009.70" y="423.1" width="2.1" height="95.6" fill="#1e90ff"/>
<rect x="1013.06" y="423.1" width="2.1" height="95.6" fill="#1e90ff"/>
<rect x="1016.42" y="423.1" width="2.1" height="95.6" fill="#1e90ff"/>
<rect x="1019.79" y="423.1" width="2.1" height="95.6" fill="#1e90ff"/>
<rect x="1023.15" y="423.1" width="2.1" height="95.6" fill="#1e90ff"/>
<rect x="1026.51" y="423.1" width="2.1" height="95.6" fill="#ff0000"/>
<rect x="1029.88" y="423.1" width="2.1" height="95.6" fill="#ff0000"/>
<rect x="1033.24" y="423.1" width="2.1" height="95.6" fill="#ff0000"/>
<rect x="1036.60" y="423.1" width="2.1" height="95.6" fill="#ff0000"/>
<rect x="1039.96" y="423.1" width="2.1" height="95.6" fill="#ff0000"/>
<rect x="1043.33" y="423.1" width="2.1" height="95.6" fill="#ff0000"/>
<rect x="1046.69" y="423.1" width="2.1" height="95.6" fill="#ff0000"/>
<rect x="1050.05" y="423.1" width="2.1" height="95.6" fill="#ff0000"/>
<rect x="1053.41" y="423.1" width="2.1" height="95.6" fill="#ff0000"/>
<rect x="1056.78" y="423.1" width="2.1" height="95.6" fill="#ff0000"/>
<rect x="1060.14" y="423.1" width="2.1" height="95.6" fill="#ff0000"/>
<rect x="1063.50" y="423.1" width="2.1" height="95.6" fill="#ff0000"/>
<rect x="1066.86" y="423.1" width="2.1" height="95.6" fill="#ff0000"/>
<rect x="1070.22" y="423.1" width="2.1" height="95.6" fill="#ff0000"/>
<rect x="1073.59" y="423.1" width="2.1" height="95.6" fill="#ff0000"/>
<rect x="1076.95" y="423.1" width="2.1" height="95.6" fill="#ff0000"/>
<rect x="1080.31" y="423.1" width="2.1" height="95.6" fill="#ff0000"/>
<rect x="1083.67" y="423.1" width="2.1" height="95.6" fill="#ff0000"/>
<rect x="1087.04" y="423.1" width="2.1" height="95.6" fill="#ff0000"/>
<rect x="1090.40" y="423.1" width="2.1" height="95.6" fill="#ff0000"/>
<rect x="1093.76" y="423.1" width="2.1" height="95.6" fill="#ff0000"/>
<rect x="1097.12" y="423.1" width="2.1" height="95.6" fill="#ff0000"/>
<rect x="1100.49" y="423.1" width="2.1" height="95.6" fill="#ff0000"/>
<rect x="1103.85" y="423.1" width="2.1" height="95.6" fill="#ff0000"/>
<rect x="1107.21" y="423.1" width="2.1" height="95.6" fill="#ff0000"/>
<rect x="1110.58" y="423.1" width="2.1" height="95.6" fill="#ff0000"/>
<rect x="1113.94" y="423.1" width="2.1" height="95.6" fill="#ff0000"/>
<rect x="1117.30" y="423.1" width="2.1" height="95.6" fill="#ff0000"/>
<rect x="1120.66" y="423.1" width="2.1" height="95.6" fill="#ff0000"/>
<rect x="1124.03" y="423.1" width="2.1" height="95.6" fill="#ff0000"/>
<rect x="1127.39" y="423.1" width="2.1" height="95.6" fill="#ff0000"/>
<rect x="1130.75" y="423.1" width="2.1" height="95.6" fill="#ff0000"/>
<rect x="1134.11" y="423.1" width="2.1" height="95.6" fill="#ff0000"/>
</g>
<rect x="0" y="0" width="1445" height="0.9" fill="#ababab"/>
<rect x="1.2" y="0.9" width="1443.8" height="0.9" fill="#7e7e7e"/>
<rect x="2.3" y="1.8" width="1442.7" height="0.9" fill="#d9d9d9"/>
<rect x="0" y="0" width="1.2" height="527" fill="#a9a9a9"/>
<rect x="1.2" y="0.9" width="1.1" height="526.1" fill="#7a7a7a"/>
<rect x="2.3" y="1.75" width="0.7" height="525.3" fill="#e0e0e0"/>
<rect x="1424.1" y="2.3" width="1.8" height="517.5" fill="#8c8c8c"/>
<rect x="1423.5" y="2.3" width="0.6" height="516" fill="#dedede"/>
<rect x="2.3" y="323.65" width="1422.7" height="1.9" fill="#4a4a4a"/>
<rect x="3" y="325.55" width="1420.5" height="0.5" fill="#e4e4e4"/>
<rect x="2.3" y="421.15" width="1422.7" height="1.9" fill="#4a4a4a"/>
<rect x="3" y="423.05" width="1420.5" height="0.5" fill="#e4e4e4"/>
<rect x="3" y="518.4" width="1422.9" height="1.4" fill="#858585"/>
<rect x="3" y="517.9" width="1421" height="0.5" fill="#dedede"/>
<rect x="1443.8" y="2.3" width="1.2" height="524.7" fill="#e2e2e2"/>
<rect x="2.3" y="299.8" width="1.4" height="9.6" fill="#9a9a9a"/>
<g font-family='"Liberation Sans", sans-serif'>
<path d="M3.3 3.7 L6.3 3.7 L4.8 5.9 Z" fill="#000"/>
<rect x="1425.7" y="14.40" width="1.1" height="0.8" fill="#1a1a1a"/>
<rect x="1425.7" y="28.41" width="1.1" height="0.8" fill="#1a1a1a"/>
<rect x="1425.7" y="42.42" width="1.1" height="0.8" fill="#1a1a1a"/>
<rect x="1425.7" y="56.43" width="1.1" height="0.8" fill="#1a1a1a"/>
<rect x="1425.7" y="70.44" width="1.1" height="0.8" fill="#1a1a1a"/>
<rect x="1425.7" y="84.45" width="1.1" height="0.8" fill="#1a1a1a"/>
<rect x="1425.7" y="98.46" width="1.1" height="0.8" fill="#1a1a1a"/>
<rect x="1425.7" y="112.47" width="1.1" height="0.8" fill="#1a1a1a"/>
<rect x="1425.7" y="126.48" width="1.1" height="0.8" fill="#1a1a1a"/>
<rect x="1425.7" y="140.49" width="1.1" height="0.8" fill="#1a1a1a"/>
<rect x="1425.7" y="154.50" width="1.1" height="0.8" fill="#1a1a1a"/>
<rect x="1425.7" y="168.51" width="1.1" height="0.8" fill="#1a1a1a"/>
<rect x="1425.7" y="182.52" width="1.1" height="0.8" fill="#1a1a1a"/>
<rect x="1425.7" y="196.53" width="1.1" height="0.8" fill="#1a1a1a"/>
<rect x="1425.7" y="210.54" width="1.1" height="0.8" fill="#1a1a1a"/>
<rect x="1425.7" y="224.55" width="1.1" height="0.8" fill="#1a1a1a"/>
<rect x="1425.7" y="238.56" width="1.1" height="0.8" fill="#1a1a1a"/>
<rect x="1425.7" y="252.57" width="1.1" height="0.8" fill="#1a1a1a"/>
<rect x="1425.7" y="266.58" width="1.1" height="0.8" fill="#1a1a1a"/>
<rect x="1425.7" y="280.59" width="1.1" height="0.8" fill="#1a1a1a"/>
<rect x="1425.7" y="294.60" width="1.1" height="0.8" fill="#1a1a1a"/>
<rect x="1425.7" y="308.61" width="1.1" height="0.8" fill="#1a1a1a"/>
<rect x="1425.7" y="322.62" width="1.1" height="0.8" fill="#1a1a1a"/>
<rect x="1426" y="235.9" width="15.8" height="5.6" fill="#000"/>
<rect x="1425.5" y="367.7" width="1.2" height="0.6" fill="#333"/>
<rect x="1.85" y="519" width="0.5" height="1.6" fill="#222"/>
<rect x="28.75" y="519" width="0.5" height="1.6" fill="#222"/>
<rect x="55.65" y="519" width="0.5" height="1.6" fill="#222"/>
<rect x="82.55" y="519" width="0.5" height="1.6" fill="#222"/>
<rect x="109.45" y="519" width="0.5" height="1.6" fill="#222"/>
<rect x="136.35" y="519" width="0.5" height="1.6" fill="#222"/>
<rect x="163.25" y="519" width="0.5" height="1.6" fill="#222"/>
<rect x="190.15" y="519" width="0.5" height="1.6" fill="#222"/>
<rect x="217.05" y="519" width="0.5" height="1.6" fill="#222"/>
<rect x="243.95" y="519" width="0.5" height="1.6" fill="#222"/>
<rect x="270.85" y="519" width="0.5" height="1.6" fill="#222"/>
<rect x="297.75" y="519" width="0.5" height="1.6" fill="#222"/>
<rect x="324.65" y="519" width="0.5" height="1.6" fill="#222"/>
<rect x="351.55" y="519" width="0.5" height="1.6" fill="#222"/>
<rect x="378.45" y="519" width="0.5" height="1.6" fill="#222"/>
<rect x="405.35" y="519" width="0.5" height="1.6" fill="#222"/>
<rect x="432.25" y="519" width="0.5" height="1.6" fill="#222"/>
<rect x="459.15" y="519" width="0.5" height="1.6" fill="#222"/>
<rect x="486.05" y="519" width="0.5" height="1.6" fill="#222"/>
<rect x="512.95" y="519" width="0.5" height="1.6" fill="#222"/>
<rect x="539.85" y="519" width="0.5" height="1.6" fill="#222"/>
<rect x="566.75" y="519" width="0.5" height="1.6" fill="#222"/>
<rect x="593.65" y="519" width="0.5" height="1.6" fill="#222"/>
<rect x="620.55" y="519" width="0.5" height="1.6" fill="#222"/>
<rect x="647.45" y="519" width="0.5" height="1.6" fill="#222"/>
<rect x="674.35" y="519" width="0.5" height="1.6" fill="#222"/>
<rect x="701.25" y="519" width="0.5" height="1.6" fill="#222"/>
<rect x="728.15" y="519" width="0.5" height="1.6" fill="#222"/>
<rect x="755.05" y="519" width="0.5" height="1.6" fill="#222"/>
<rect x="781.95" y="519" width="0.5" height="1.6" fill="#222"/>
<rect x="808.85" y="519" width="0.5" height="1.6" fill="#222"/>
<rect x="835.75" y="519" width="0.5" height="1.6" fill="#222"/>
<rect x="862.65" y="519" width="0.5" height="1.6" fill="#222"/>
<rect x="889.55" y="519" width="0.5" height="1.6" fill="#222"/>
<rect x="916.45" y="519" width="0.5" height="1.6" fill="#222"/>
<rect x="943.35" y="519" width="0.5" height="1.6" fill="#222"/>
<rect x="970.25" y="519" width="0.5" height="1.6" fill="#222"/>
<rect x="997.15" y="519" width="0.5" height="1.6" fill="#222"/>
<rect x="1024.05" y="519" width="0.5" height="1.6" fill="#222"/>
<rect x="1050.95" y="519" width="0.5" height="1.6" fill="#222"/>
<rect x="1077.85" y="519" width="0.5" height="1.6" fill="#222"/>
<rect x="1104.75" y="519" width="0.5" height="1.6" fill="#222"/>
<rect x="1131.65" y="519" width="0.5" height="1.6" fill="#222"/>
</g>
<g font-family='"Liberation Sans", sans-serif'>
<rect x="234.60" y="113.80" width="304.20" height="265.20" fill="#000" opacity="0.48" filter="url(#sh)"/>
<rect x="235.10" y="113.30" width="303.20" height="263.70" fill="#f0f0f0" stroke="#9a9a9a" stroke-width="0.4"/>
<rect x="235.30" y="113.50" width="302.80" height="11.70" fill="#ffffff"/>
<rect x="238.60" y="115.90" width="5.80" height="4.50" fill="#e4f0fa" stroke="#62a5dc" stroke-width="0.5"/>
<rect x="238.60" y="115.90" width="5.80" height="1.10" fill="#4a9bd8"/>
<rect x="241.40" y="117.80" width="4.20" height="3.90" fill="#f2cb28" stroke="#b08c08" stroke-width="0.4"/>
<path d="M526.40 117.20 L530.20 121.00 M530.20 117.20 L526.40 121.00" stroke="#8a8a8a" stroke-width="0.5" fill="none"/>
<rect x="238.40" y="128.90" width="253.30" height="243.80" fill="#ffffff" stroke="#828790" stroke-width="0.5"/>
<g stroke="#a0a0a0" stroke-width="0.4" stroke-dasharray="0.5 0.5" fill="none">
<path d="M244.6 135.00 L244.6 177.24"/>
<path d="M246.2 133.50 L249.5 133.50 M246.2 163.66 L249.5 163.66 M246.2 178.74 L249.5 178.74"/>
<path d="M253.2 136.50 L253.2 156.12 M253.2 166.66 L253.2 171.20 M253.2 181.74 L253.2 186.28"/>
<path d="M253.2 141.04 L258.6 141.04"/>
<path d="M253.2 148.58 L258.6 148.58"/>
<path d="M253.2 156.12 L258.6 156.12"/>
<path d="M253.2 171.20 L258.6 171.20"/>
<path d="M253.2 186.28 L258.6 186.28"/>
</g>
<rect x="266.60" y="137.94" width="56.30" height="6.20" fill="#ececec"/>
<rect x="243.00" y="131.90" width="3.20" height="3.20" fill="#ffffff" stroke="#8c8c8c" stroke-width="0.5"/>
<path d="M243.8 133.50 L245.4 133.50" stroke="#333" stroke-width="0.45"/>
<rect x="250.20" y="130.90" width="6.50" height="5.50" fill="#ffffff" stroke="#2a5bd7" stroke-width="0.6"/>
<rect x="250.20" y="130.90" width="6.50" height="1.60" fill="#2a5bd7"/>
<path d="M251.2 135.10 L252.6 133.70 L253.8 134.90 L255.3 133.40" stroke="#2a5bd7" stroke-width="0.5" fill="none"/>
<rect x="259.20" y="138.14" width="5.80" height="5.80" fill="#f4cf2a" stroke="#9a7b0a" stroke-width="0.5" rx="0.5"/>
<text transform="translate(262.2 142.84) scale(0.1) rotate(0.03)" font-size="52" font-style="italic" text-anchor="middle" fill="#5a4500" font-family='"Liberation Serif", serif'>f</text>
<rect x="259.20" y="145.68" width="5.80" height="5.80" fill="#f4cf2a" stroke="#9a7b0a" stroke-width="0.5" rx="0.5"/>
<text transform="translate(262.2 150.38) scale(0.1) rotate(0.03)" font-size="52" font-style="italic" text-anchor="middle" fill="#5a4500" font-family='"Liberation Serif", serif'>f</text>
<rect x="259.20" y="153.22" width="5.80" height="5.80" fill="#f4cf2a" stroke="#9a7b0a" stroke-width="0.5" rx="0.5"/>
<text transform="translate(262.2 157.92) scale(0.1) rotate(0.03)" font-size="52" font-style="italic" text-anchor="middle" fill="#5a4500" font-family='"Liberation Serif", serif'>f</text>
<rect x="243.00" y="162.06" width="3.20" height="3.20" fill="#ffffff" stroke="#8c8c8c" stroke-width="0.5"/>
<path d="M243.8 163.66 L245.4 163.66" stroke="#333" stroke-width="0.45"/>
<rect x="250.20" y="161.06" width="6.50" height="5.50" fill="#ffffff" stroke="#2a5bd7" stroke-width="0.6"/>
<rect x="250.20" y="161.06" width="6.50" height="1.60" fill="#2a5bd7"/>
<path d="M251.2 165.26 L252.6 163.86 L253.8 165.06 L255.3 163.56" stroke="#2a5bd7" stroke-width="0.5" fill="none"/>
<rect x="259.20" y="168.30" width="5.80" height="5.80" fill="#f4cf2a" stroke="#9a7b0a" stroke-width="0.5" rx="0.5"/>
<text transform="translate(262.2 173.00) scale(0.1) rotate(0.03)" font-size="52" font-style="italic" text-anchor="middle" fill="#5a4500" font-family='"Liberation Serif", serif'>f</text>
<rect x="243.00" y="177.14" width="3.20" height="3.20" fill="#ffffff" stroke="#8c8c8c" stroke-width="0.5"/>
<path d="M243.8 178.74 L245.4 178.74" stroke="#333" stroke-width="0.45"/>
<rect x="250.20" y="176.14" width="6.50" height="5.50" fill="#ffffff" stroke="#2a5bd7" stroke-width="0.6"/>
<rect x="250.20" y="176.14" width="6.50" height="1.60" fill="#2a5bd7"/>
<path d="M251.2 180.34 L252.6 178.94 L253.8 180.14 L255.3 178.64" stroke="#2a5bd7" stroke-width="0.5" fill="none"/>
<rect x="259.20" y="183.38" width="5.80" height="5.80" fill="#f4cf2a" stroke="#9a7b0a" stroke-width="0.5" rx="0.5"/>
<text transform="translate(262.2 188.08) scale(0.1) rotate(0.03)" font-size="52" font-style="italic" text-anchor="middle" fill="#5a4500" font-family='"Liberation Serif", serif'>f</text>
<rect x="495.30" y="129.80" width="39.70" height="8.20" fill="#e1e1e1" stroke="#adadad" stroke-width="0.45"/>
<rect x="495.30" y="141.50" width="39.70" height="8.20" fill="#e1e1e1" stroke="#adadad" stroke-width="0.45"/>
<rect x="495.30" y="364.30" width="39.70" height="8.20" fill="#e1e1e1" stroke="#adadad" stroke-width="0.45"/>
<rect x="544.40" y="78.20" width="472.40" height="176.40" fill="#000" opacity="0.48" filter="url(#sh)"/>
<rect x="544.90" y="77.70" width="471.40" height="174.90" fill="#f0f0f0" stroke="#8f8f8f" stroke-width="0.4"/>
<rect x="545.10" y="77.90" width="471.00" height="12.10" fill="#ffffff"/>
<rect x="690.90" y="79.50" width="72.10" height="8.00" fill="#e5f1fb"/>
<rect x="694.20" y="82.30" width="2.40" height="2.40" fill="#c9d9ea"/>
<path d="M1003.90 81.60 L1007.70 85.40 M1007.70 81.60 L1003.90 85.40" stroke="#333" stroke-width="0.5" fill="none"/>
<rect x="548.00" y="101.80" width="465.00" height="134.60" fill="#ffffff" stroke="#d9d9d9" stroke-width="0.45"/>
<rect x="548.70" y="94.60" width="17.80" height="7.20" fill="#f3f3f3" stroke="#d9d9d9" stroke-width="0.45"/>
<rect x="566.50" y="94.60" width="21.20" height="7.20" fill="#f3f3f3" stroke="#d9d9d9" stroke-width="0.45"/>
<rect x="606.10" y="94.60" width="17.80" height="7.20" fill="#f3f3f3" stroke="#d9d9d9" stroke-width="0.45"/>
<rect x="623.90" y="94.60" width="28.70" height="7.20" fill="#f3f3f3" stroke="#d9d9d9" stroke-width="0.45"/>
<rect x="587.70" y="93.00" width="18.40" height="9.40" fill="#ffffff" stroke="#d9d9d9" stroke-width="0.45"/>
<rect x="587.95" y="101.50" width="17.90" height="1.10" fill="#ffffff"/>
<rect x="552.90" y="105.80" width="408.90" height="127.40" fill="#ffffff" stroke="#828790" stroke-width="0.5"/>
<rect x="553.20" y="124.80" width="408.30" height="8.80" fill="#ebebeb"/>
<rect x="553.20" y="141.50" width="408.30" height="8.80" fill="#ebebeb"/>
<path d="M553.2 158.4 L961.5 158.4" stroke="#e0e0e0" stroke-width="0.4"/>
<path d="M757.5 106 L757.5 158" stroke="#e6e6e6" stroke-width="0.4"/>
<rect x="554.40" y="118.10" width="6.30" height="5.50" fill="#4f94dd" stroke="#2f6fb8" stroke-width="0.4" rx="0.8"/>
<text transform="translate(557.55 122.10) scale(0.1) rotate(0.03)" font-size="36" text-anchor="middle" fill="#fff" font-weight="bold">ab</text>
<rect x="554.40" y="126.50" width="6.30" height="5.50" fill="#4f94dd" stroke="#2f6fb8" stroke-width="0.4" rx="0.8"/>
<text transform="translate(557.55 130.50) scale(0.1) rotate(0.03)" font-size="36" text-anchor="middle" fill="#fff" font-weight="bold">ab</text>
<rect x="554.40" y="134.90" width="6.30" height="5.50" fill="#4f94dd" stroke="#2f6fb8" stroke-width="0.4" rx="0.8"/>
<text transform="translate(557.55 138.90) scale(0.1) rotate(0.03)" font-size="36" text-anchor="middle" fill="#fff" font-weight="bold">ab</text>
<rect x="554.40" y="143.30" width="6.30" height="5.50" fill="#3fce45" stroke="#23a32b" stroke-width="0.4" rx="0.8"/>
<path d="M555.3 147.40 L557 145.20 L558.2 146.60 L559.9 144.80" stroke="#fff" stroke-width="0.7" fill="none"/>
<rect x="554.40" y="151.60" width="6.30" height="5.50" fill="#3fce45" stroke="#23a32b" stroke-width="0.4" rx="0.8"/>
<path d="M555.3 155.70 L557 153.50 L558.2 154.90 L559.9 153.10" stroke="#fff" stroke-width="0.7" fill="none"/>
<rect x="965.20" y="210.20" width="43.50" height="8.80" fill="#e1e1e1" stroke="#adadad" stroke-width="0.45"/>
<rect x="965.20" y="224.30" width="43.50" height="8.50" fill="#e1e1e1" stroke="#adadad" stroke-width="0.45"/>
<rect x="913.20" y="240.40" width="30.60" height="8.20" fill="#e1e1e1" stroke="#0078d7" stroke-width="0.8"/>
<rect x="947.20" y="240.40" width="30.60" height="8.20" fill="#e1e1e1" stroke="#adadad" stroke-width="0.45"/>
<rect x="981.20" y="240.40" width="30.50" height="8.20" fill="#e1e1e1" stroke="#adadad" stroke-width="0.45"/>
<rect x="611.8" y="260.1" width="17.2" height="0.9" rx="0.4" fill="#ffffff" opacity="0.55"/>
<g fill="#b5b5b5"><rect x="1014.2" y="250.6" width="0.8" height="0.8"/><rect x="1012.9" y="250.6" width="0.8" height="0.8"/><rect x="1014.2" y="249.3" width="0.8" height="0.8"/></g>
<rect x="548.90" y="265.40" width="283.80" height="105.40" fill="#000" opacity="0.48" filter="url(#sh)"/>
<rect x="549.40" y="264.90" width="282.80" height="103.90" fill="#f0f0f0" stroke="#8f8f8f" stroke-width="0.4"/>
<rect x="549.60" y="265.10" width="282.40" height="12.30" fill="#ffffff"/>
<circle cx="556.15" cy="273.22" r="0.55" fill="#e3aa10" stroke="#a37a06" stroke-width="0.23"/>
<circle cx="556.15" cy="268.28" r="0.42" fill="#f3c722" stroke="#a37a06" stroke-width="0.23"/>
<path d="M556.15 268.46 C557.22 268.46 557.74 269.28 557.81 270.38 C557.88 271.49 558.18 272.00 559.06 272.48 L559.06 272.78 C557.62 273.11 554.67 273.11 553.24 272.78 L553.24 272.48 C554.12 272.00 554.42 271.49 554.49 270.38 C554.56 269.28 555.08 268.46 556.15 268.46 Z" fill="url(#gold)" stroke="#a37a06" stroke-width="0.23"/>
<path d="M555.56 269.13 C555.19 269.83 555.12 270.75 554.90 271.71" stroke="#fffbd6" stroke-width="0.55" fill="none" stroke-linecap="round" opacity="0.9"/>
<path d="M820.30 269.00 L824.10 272.80 M824.10 269.00 L820.30 272.80" stroke="#999" stroke-width="0.5" fill="none"/>
<circle cx="563.10" cy="297.15" r="1.56" fill="#e3aa10" stroke="#a37a06" stroke-width="0.43"/>
<circle cx="563.10" cy="283.25" r="1.19" fill="#f3c722" stroke="#a37a06" stroke-width="0.43"/>
<path d="M563.10 283.77 C566.11 283.77 567.56 286.05 567.77 289.16 C567.98 292.27 568.81 293.73 571.30 295.08 L571.30 295.91 C567.25 296.84 558.95 296.84 554.90 295.91 L554.90 295.08 C557.39 293.73 558.22 292.27 558.43 289.16 C558.64 286.05 560.09 283.77 563.10 283.77 Z" fill="url(#gold)" stroke="#a37a06" stroke-width="0.43"/>
<path d="M561.44 285.63 C560.40 287.61 560.20 290.20 559.57 292.90" stroke="#fffbd6" stroke-width="1.56" fill="none" stroke-linecap="round" opacity="0.9"/>
<path d="M824.1 288.4 L825.3 287.0 L826.5 288.4 M824.1 305.4 L825.3 306.8 L826.5 305.4" stroke="#9a9a9a" stroke-width="0.5" fill="none"/>
<rect x="552.70" y="313.30" width="276.20" height="38.90" fill="#ffffff" stroke="#828790" stroke-width="0.5"/>
<rect x="553.00" y="313.60" width="275.60" height="9.00" fill="#e6e6e6" stroke="#bdbdbd" stroke-width="0.3"/>
<path d="M621.8 313.8 L621.8 322.4" stroke="#c8c8c8" stroke-width="0.4"/>
<circle cx="557.65" cy="320.26" r="0.51" fill="#e3aa10" stroke="#a37a06" stroke-width="0.22"/>
<circle cx="557.65" cy="315.74" r="0.39" fill="#f3c722" stroke="#a37a06" stroke-width="0.22"/>
<path d="M557.65 315.91 C558.63 315.91 559.10 316.65 559.17 317.66 C559.24 318.68 559.51 319.15 560.32 319.59 L560.32 319.86 C559.00 320.16 556.30 320.16 554.98 319.86 L554.98 319.59 C555.79 319.15 556.06 318.68 556.13 317.66 C556.20 316.65 556.67 315.91 557.65 315.91 Z" fill="url(#gold)" stroke="#a37a06" stroke-width="0.22"/>
<path d="M557.11 316.51 C556.77 317.16 556.70 318.00 556.50 318.88" stroke="#fffbd6" stroke-width="0.51" fill="none" stroke-linecap="round" opacity="0.9"/>
<rect x="675.20" y="356.50" width="30.80" height="8.80" fill="#e1e1e1" stroke="#adadad" stroke-width="0.45"/>
</g>
<g id="tx" fill="#000" stroke="#000" stroke-width="0" style="white-space:pre">
<text transform="translate(8.00 7.00) scale(0.0875 0.1)" font-size="46">XAUUSD.c,M5</text>
<text transform="translate(37.00 7.00) scale(0.0840 0.1)" font-size="46">1831.40 1831.78 1830.70 1831.78</text>
<text transform="translate(4.00 331.00) scale(0.0860 0.1)" font-size="45">C(16) 0.000 -0.255</text>
<text transform="translate(4.00 429.00) scale(0.0869 0.1)" font-size="45">E(16) 0.000 1.000 -0.139</text>
<text transform="translate(1427.50 17.00) scale(0.0836 0.1)" font-size="45">1844.55</text>
<text transform="translate(1427.50 31.00) scale(0.0836 0.1)" font-size="45">1843.75</text>
<text transform="translate(1427.50 45.00) scale(0.0836 0.1)" font-size="45">1842.95</text>
<text transform="translate(1427.50 59.00) scale(0.0836 0.1)" font-size="45">1842.15</text>
<text transform="translate(1427.50 73.00) scale(0.0836 0.1)" font-size="45">1841.35</text>
<text transform="translate(1427.50 87.00) scale(0.0836 0.1)" font-size="45">1840.55</text>
<text transform="translate(1427.50 101.00) scale(0.0836 0.1)" font-size="45">1839.75</text>
<text transform="translate(1427.50 115.00) scale(0.0836 0.1)" font-size="45">1838.95</text>
<text transform="translate(1427.50 129.00) scale(0.0836 0.1)" font-size="45">1838.15</text>
<text transform="translate(1427.50 143.00) scale(0.0836 0.1)" font-size="45">1837.35</text>
<text transform="translate(1427.50 157.00) scale(0.0836 0.1)" font-size="45">1836.55</text>
<text transform="translate(1427.50 171.00) scale(0.0836 0.1)" font-size="45">1835.75</text>
<text transform="translate(1427.50 185.00) scale(0.0836 0.1)" font-size="45">1834.95</text>
<text transform="translate(1427.50 199.00) scale(0.0836 0.1)" font-size="45">1834.15</text>
<text transform="translate(1427.50 213.00) scale(0.0836 0.1)" font-size="45">1833.35</text>
<text transform="translate(1427.50 227.00) scale(0.0836 0.1)" font-size="45">1832.55</text>
<text transform="translate(1427.50 241.00) scale(0.0836 0.1)" font-size="45">1831.75</text>
<text transform="translate(1427.50 255.00) scale(0.0836 0.1)" font-size="45">1830.95</text>
<text transform="translate(1427.50 269.00) scale(0.0836 0.1)" font-size="45">1830.15</text>
<text transform="translate(1427.50 283.00) scale(0.0836 0.1)" font-size="45">1829.35</text>
<text transform="translate(1427.50 297.00) scale(0.0836 0.1)" font-size="45">1828.55</text>
<text transform="translate(1427.50 311.00) scale(0.0836 0.1)" font-size="45">1827.75</text>
<text transform="translate(1427.50 325.00) scale(0.0836 0.1)" font-size="45">1826.95</text>
<text transform="translate(1427.50 241.00) scale(0.0836 0.1)" font-size="45" fill="#fff" stroke="#fff">1831.78</text>
<text transform="translate(1426.50 330.00) scale(0.0999 0.1)" font-size="45">0.388</text>
<text transform="translate(1426.50 370.00) scale(0.1028 0.1)" font-size="45">0.00</text>
<text transform="translate(1426.50 421.00) scale(0.1058 0.1)" font-size="45">-0.486</text>
<text transform="translate(1426.50 427.00) scale(0.1079 0.1)" font-size="45">0.1</text>
<text transform="translate(1426.50 518.00) scale(0.0899 0.1)" font-size="45">0</text>
<text transform="translate(1397.00 319.00) scale(0.0879 0.1)" font-size="44" fill="#f4f4f4" stroke="#f4f4f4">Litoral Trading</text>
<text transform="translate(1356.25 16.00) scale(0.1145 0.1)" font-size="56" fill="#ff0000" stroke="#ff0000" font-weight="bold" stroke-width="4">i1 Indicator: DN Trend</text>
<text transform="translate(1356.25 22.00) scale(0.1145 0.1)" font-size="56" fill="#ff0000" stroke="#ff0000" font-weight="bold" stroke-width="4">i2 Indicator: DN Trend</text>
<text transform="translate(1356.25 28.00) scale(0.1145 0.1)" font-size="56" fill="#ff0000" stroke="#ff0000" font-weight="bold" stroke-width="4">i3 Indicator: DN Trend</text>
<text transform="translate(1356.25 35.00) scale(0.1127 0.1)" font-size="56" fill="#ffff00" stroke="#ffff00" font-weight="bold" stroke-width="4">i4 Indicator: No Signal</text>
<text transform="translate(1356.25 41.00) scale(0.1145 0.1)" font-size="56" fill="#ff0000" stroke="#ff0000" font-weight="bold" stroke-width="4">i5 Indicator: DN Trend</text>
<text transform="translate(1.75 525.00) scale(0.0874 0.1)" font-size="45">1 Mar 2023</text>
<text transform="translate(28.50 525.00) scale(0.0829 0.1)" font-size="45">1 Mar 05:20</text>
<text transform="translate(55.50 525.00) scale(0.0829 0.1)" font-size="45">1 Mar 06:00</text>
<text transform="translate(82.50 525.00) scale(0.0829 0.1)" font-size="45">1 Mar 06:40</text>
<text transform="translate(109.25 525.00) scale(0.0829 0.1)" font-size="45">1 Mar 07:20</text>
<text transform="translate(136.25 525.00) scale(0.0829 0.1)" font-size="45">1 Mar 08:00</text>
<text transform="translate(163.00 525.00) scale(0.0829 0.1)" font-size="45">1 Mar 08:40</text>
<text transform="translate(190.00 525.00) scale(0.0829 0.1)" font-size="45">1 Mar 09:20</text>
<text transform="translate(217.00 525.00) scale(0.0829 0.1)" font-size="45">1 Mar 10:00</text>
<text transform="translate(243.75 525.00) scale(0.0829 0.1)" font-size="45">1 Mar 10:40</text>
<text transform="translate(270.75 525.00) scale(0.0840 0.1)" font-size="45">1 Mar 11:20</text>
<text transform="translate(297.50 525.00) scale(0.0829 0.1)" font-size="45">1 Mar 12:00</text>
<text transform="translate(324.50 525.00) scale(0.0829 0.1)" font-size="45">1 Mar 12:40</text>
<text transform="translate(351.50 525.00) scale(0.0829 0.1)" font-size="45">1 Mar 13:20</text>
<text transform="translate(378.25 525.00) scale(0.0829 0.1)" font-size="45">1 Mar 14:00</text>
<text transform="translate(405.25 525.00) scale(0.0829 0.1)" font-size="45">1 Mar 14:40</text>
<text transform="translate(432.00 525.00) scale(0.0829 0.1)" font-size="45">1 Mar 15:20</text>
<text transform="translate(459.00 525.00) scale(0.0829 0.1)" font-size="45">1 Mar 16:00</text>
<text transform="translate(486.00 525.00) scale(0.0829 0.1)" font-size="45">1 Mar 16:40</text>
<text transform="translate(512.75 525.00) scale(0.0829 0.1)" font-size="45">1 Mar 17:20</text>
<text transform="translate(539.75 525.00) scale(0.0829 0.1)" font-size="45">1 Mar 18:00</text>
<text transform="translate(566.50 525.00) scale(0.0829 0.1)" font-size="45">1 Mar 18:40</text>
<text transform="translate(593.50 525.00) scale(0.0829 0.1)" font-size="45">1 Mar 19:20</text>
<text transform="translate(620.50 525.00) scale(0.0829 0.1)" font-size="45">1 Mar 20:00</text>
<text transform="translate(647.25 525.00) scale(0.0829 0.1)" font-size="45">1 Mar 20:40</text>
<text transform="translate(674.25 525.00) scale(0.0829 0.1)" font-size="45">1 Mar 21:20</text>
<text transform="translate(701.00 525.00) scale(0.0829 0.1)" font-size="45">1 Mar 22:00</text>
<text transform="translate(728.00 525.00) scale(0.0829 0.1)" font-size="45">1 Mar 22:40</text>
<text transform="translate(755.00 525.00) scale(0.0829 0.1)" font-size="45">1 Mar 23:20</text>
<text transform="translate(781.75 525.00) scale(0.0829 0.1)" font-size="45">2 Mar 01:00</text>
<text transform="translate(808.75 525.00) scale(0.0829 0.1)" font-size="45">2 Mar 01:40</text>
<text transform="translate(835.50 525.00) scale(0.0829 0.1)" font-size="45">2 Mar 02:20</text>
<text transform="translate(862.50 525.00) scale(0.0829 0.1)" font-size="45">2 Mar 03:00</text>
<text transform="translate(889.50 525.00) scale(0.0829 0.1)" font-size="45">2 Mar 03:40</text>
<text transform="translate(916.25 525.00) scale(0.0829 0.1)" font-size="45">2 Mar 04:20</text>
<text transform="translate(943.25 525.00) scale(0.0829 0.1)" font-size="45">2 Mar 05:00</text>
<text transform="translate(970.00 525.00) scale(0.0829 0.1)" font-size="45">2 Mar 05:40</text>
<text transform="translate(997.00 525.00) scale(0.0829 0.1)" font-size="45">2 Mar 06:20</text>
<text transform="translate(1024.00 525.00) scale(0.0829 0.1)" font-size="45">2 Mar 07:00</text>
<text transform="translate(1050.75 525.00) scale(0.0829 0.1)" font-size="45">2 Mar 07:40</text>
<text transform="translate(1077.75 525.00) scale(0.0829 0.1)" font-size="45">2 Mar 08:20</text>
<text transform="translate(1104.50 525.00) scale(0.0829 0.1)" font-size="45">2 Mar 09:00</text>
<text transform="translate(1131.50 525.00) scale(0.0829 0.1)" font-size="45">2 Mar 09:40</text>
<text transform="translate(247.75 121.00) scale(0.0930 0.1)" font-size="52" fill="#a6a6a6" stroke="#a6a6a6">Indicators on XAUUSD.c,M5</text>
<text transform="translate(508.00 121.00) scale(0.1000 0.1)" font-size="48" fill="#8a8a8a" stroke="#8a8a8a">?</text>
<text transform="translate(258.75 135.00) scale(0.0971 0.1)" font-size="47">Main chart</text>
<text transform="translate(267.75 143.00) scale(0.0936 0.1)" font-size="47">ProfitLab_5min_Scalping_A</text>
<text transform="translate(267.75 151.00) scale(0.0936 0.1)" font-size="47">ProfitLab_5min_Scalping_B</text>
<text transform="translate(267.75 158.00) scale(0.0932 0.1)" font-size="47">ProfitLab_5min_Scalping_D</text>
<text transform="translate(258.75 166.00) scale(0.0999 0.1)" font-size="47">Indicator window 1</text>
<text transform="translate(267.75 173.00) scale(0.0932 0.1)" font-size="47">ProfitLab_5min_Scalping_C</text>
<text transform="translate(258.75 181.00) scale(0.0999 0.1)" font-size="47">Indicator window 2</text>
<text transform="translate(267.75 188.00) scale(0.0936 0.1)" font-size="47">ProfitLab_5min_Scalping_E</text>
<text transform="translate(511.00 136.00) scale(0.1000 0.1)" font-size="47">Edit</text>
<text transform="translate(508.25 148.00) scale(0.1000 0.1)" font-size="47">Delete</text>
<text transform="translate(509.25 370.00) scale(0.1000 0.1)" font-size="47">Close</text>
<text transform="translate(549.00 86.00) scale(0.0992 0.1)" font-size="50">Custom Indicator - ProfitLab_5min_Scalping_A</text>
<text transform="translate(704.25 85.00) scale(0.0965 0.1)" font-size="50" fill="#c8ccd2" stroke="#c8ccd2">Rectangular Snip</text>
<text transform="translate(985.75 85.00) scale(0.1000 0.1)" font-size="48" fill="#333" stroke="#333">?</text>
<text transform="translate(551.25 100.00) scale(0.0912 0.1)" font-size="47">About</text>
<text transform="translate(568.50 100.00) scale(0.0897 0.1)" font-size="47">Common</text>
<text transform="translate(608.50 100.00) scale(0.0891 0.1)" font-size="47">Colors</text>
<text transform="translate(626.25 100.00) scale(0.0920 0.1)" font-size="47">Visualization</text>
<text transform="translate(591.00 99.00) scale(0.0906 0.1)" font-size="47">Inputs</text>
<text transform="translate(556.25 114.00) scale(0.0917 0.1)" font-size="47">Variable</text>
<text transform="translate(759.75 114.00) scale(0.0960 0.1)" font-size="47">Value</text>
<text transform="translate(562.25 123.00) scale(0.0914 0.1)" font-size="47">BarsCount</text>
<text transform="translate(759.00 123.00) scale(0.0893 0.1)" font-size="47">100</text>
<text transform="translate(562.25 131.00) scale(0.0919 0.1)" font-size="47">PeriodCount</text>
<text transform="translate(759.00 131.00) scale(0.0880 0.1)" font-size="47">30</text>
<text transform="translate(562.25 140.00) scale(0.0929 0.1)" font-size="47">PriceCount</text>
<text transform="translate(759.00 140.00) scale(0.0918 0.1)" font-size="47">0</text>
<text transform="translate(562.25 148.00) scale(0.0929 0.1)" font-size="47">AlertMode</text>
<text transform="translate(758.50 148.00) scale(0.0889 0.1)" font-size="47">true</text>
<text transform="translate(562.25 156.00) scale(0.0944 0.1)" font-size="47">ControlChart_EURUSD_M5</text>
<text transform="translate(758.50 156.00) scale(0.0927 0.1)" font-size="47">false</text>
<text transform="translate(981.75 217.00) scale(0.1000 0.1)" font-size="47">Load</text>
<text transform="translate(981.50 231.00) scale(0.1000 0.1)" font-size="47">Save</text>
<text transform="translate(925.00 246.00) scale(0.1000 0.1)" font-size="47">OK</text>
<text transform="translate(955.25 246.00) scale(0.1000 0.1)" font-size="47">Cancel</text>
<text transform="translate(990.25 246.00) scale(0.1000 0.1)" font-size="47">Reset</text>
<text transform="translate(562.00 273.00) scale(0.0992 0.1)" font-size="50" fill="#999" stroke="#999">Alert</text>
<text transform="translate(802.25 273.00) scale(0.1000 0.1)" font-size="48" fill="#999" stroke="#999">?</text>
<text transform="translate(578.75 289.00) scale(0.0947 0.1)" font-size="47">ProfitLab_5min_Scalping_C: Signal BUY @ XAUUSD.c 1831.04 || Time: 2023.03.02 09:48</text>
<text transform="translate(563.00 320.00) scale(0.0984 0.1)" font-size="47">15:48:16</text>
<text transform="translate(623.25 320.00) scale(0.0948 0.1)" font-size="47">ProfitLab_5min_Scalping_C: Signal BUY @ XAUUSD.c 1831.04 || Time: 2023.03.02 09:48</text>
<text transform="translate(687.25 363.00) scale(0.1000 0.1)" font-size="47">OK</text>
</g>
</svg>
</div>
</body></html>
